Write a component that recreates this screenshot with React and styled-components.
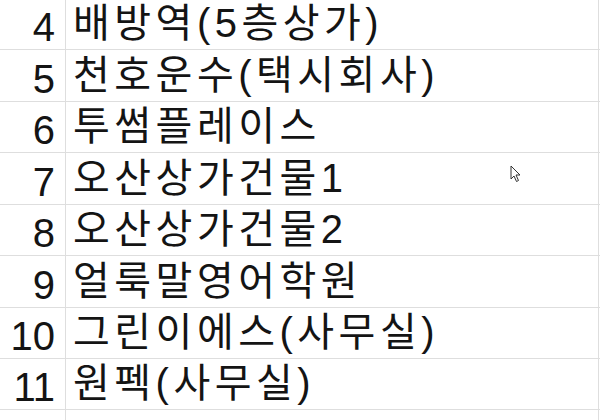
import React from 'react';
import styled, { createGlobalStyle } from 'styled-components';

const GlobalStyle = createGlobalStyle`
  html, body {
    margin: 0;
    padding: 0;
    background: #ffffff;
    overflow: hidden;
  }
`;

const Sheet = styled.div`
  position: relative;
  width: 600px;
  height: 420px;
  overflow: hidden;
  background: #ffffff;
  font-family: 'Liberation Sans', 'Noto Sans CJK KR', sans-serif;
  color: #141414;
`;

const Rows = styled.div`
  display: flex;
  flex-direction: column;
  margin-top: -1px;
`;

const Row = styled.div`
  display: grid;
  grid-template-columns: 66px 533px;
  height: 51.43px;
  box-sizing: border-box;
  border-bottom: 1px solid #dedede;
  flex-shrink: 0;
`;

const NumCell = styled.div`
  display: flex;
  align-items: flex-end;
  justify-content: flex-end;
  padding: 0 10px 2px 0;
  border-right: 1px solid #dedede;
  font-size: 40px;
  line-height: 1;
`;

const TextCell = styled.div`
  display: flex;
  align-items: flex-end;
  padding: 0 0 2px 7px;
  border-right: 1px solid #dedede;
  font-size: 40px;
  letter-spacing: 4.5px;
  line-height: 1.2;
  white-space: nowrap;
`;

const Cursor = styled.svg`
  position: absolute;
  left: 510px;
  top: 165px;
`;

const data = [
  [4, '배방역(5층상가)'],
  [5, '천호운수(택시회사)'],
  [6, '투썸플레이스'],
  [7, '오산상가건물1'],
  [8, '오산상가건물2'],
  [9, '얼룩말영어학원'],
  [10, '그린이에스(사무실)'],
  [11, '원펙(사무실)'],
  ['', ''],
];

export default function App() {
  return (
    <Sheet>
      <GlobalStyle />
      <Rows>
        {data.map(([n, t], i) => (
          <Row key={i}>
            <NumCell>{n}</NumCell>
            <TextCell>{t}</TextCell>
          </Row>
        ))}
      </Rows>
      <Cursor width="12" height="18" viewBox="0 0 12 18">
        <path
          d="M1 1 L1 14 L4 11 L6.5 16.5 L8.5 15.5 L6 10 L10 10 Z"
          fill="#ffffff"
          stroke="#333333"
          strokeWidth="1"
          strokeLinejoin="round"
        />
      </Cursor>
    </Sheet>
  );
}
